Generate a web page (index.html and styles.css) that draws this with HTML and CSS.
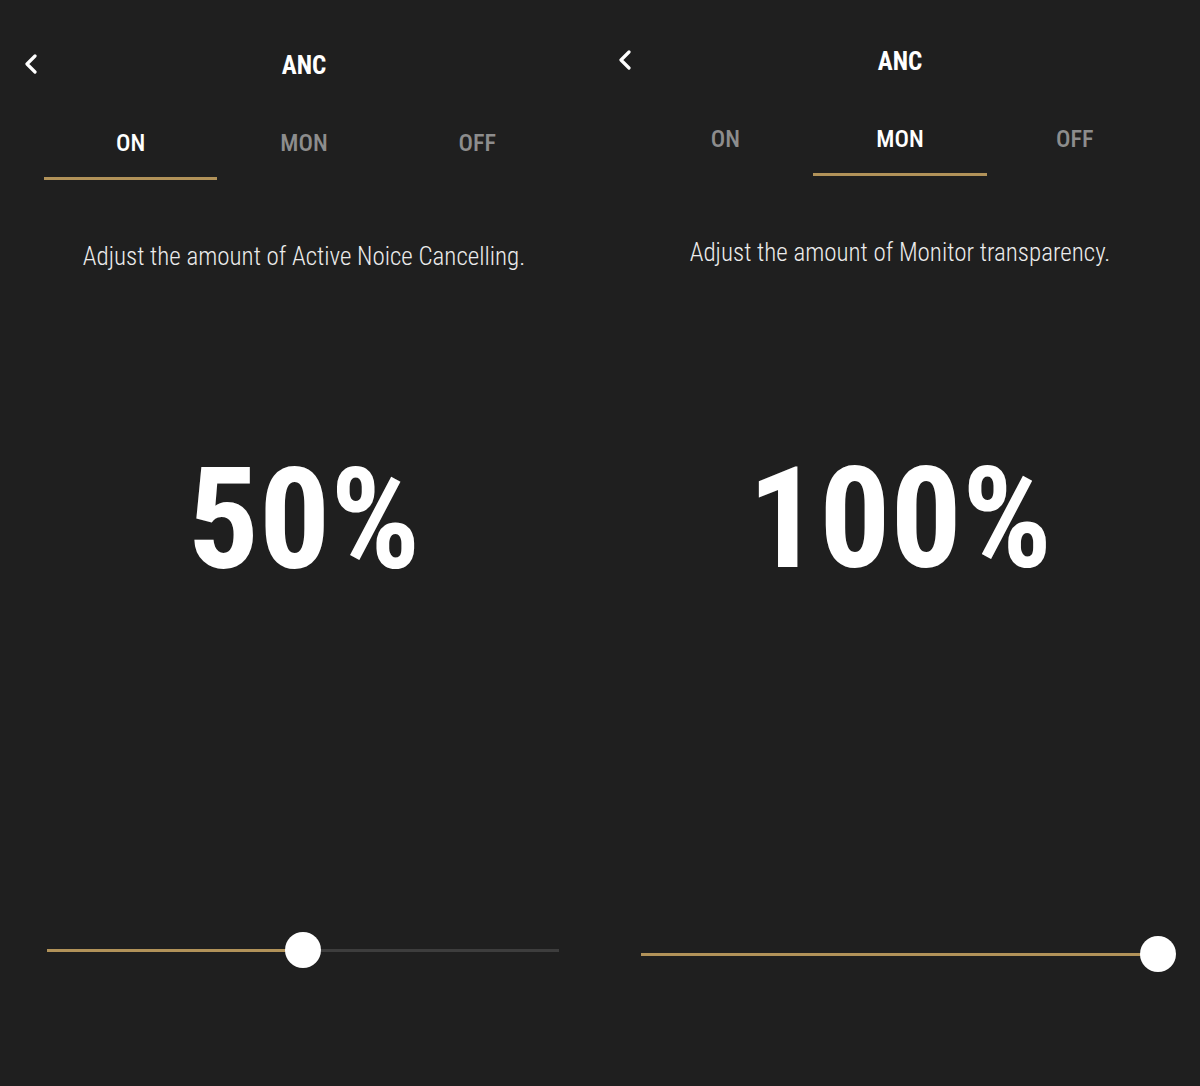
FILE: index.html
```html
<!DOCTYPE html>
<html lang="en">
<head>
    <meta charset="UTF-8">
    <title>ANC</title>
    <link rel="stylesheet" href="styles.css">
</head>
<body>

<div class="screens">
    <!-- ANC on -->
    <div class="screen screen-left">
        <div class="topbar">
            <button class="back-btn" aria-label="Back">
                <svg width="16" height="20" viewBox="0 0 16 20"><path d="M12 2 L4 10 L12 18" fill="none" stroke="#fff" stroke-width="3.2" stroke-linecap="round" stroke-linejoin="round"/></svg>
            </button>
            <h1 class="title">ANC</h1>
            <span></span>
        </div>
        <div class="tabs">
            <div class="tab active">ON</div>
            <div class="tab">MON</div>
            <div class="tab">OFF</div>
        </div>
        <p class="desc">Adjust the amount of Active Noice Cancelling.</p>
        <div class="amount">50%</div>
        <div class="slider">
            <div class="track">
                <div class="fill" style="width: 50%"></div>
            </div>
            <div class="thumb" style="left: 50%"></div>
        </div>
    </div>

    <!-- Monitor -->
    <div class="screen screen-right">
        <div class="topbar">
            <button class="back-btn" aria-label="Back">
                <svg width="16" height="20" viewBox="0 0 16 20"><path d="M12 2 L4 10 L12 18" fill="none" stroke="#fff" stroke-width="3.2" stroke-linecap="round" stroke-linejoin="round"/></svg>
            </button>
            <h1 class="title">ANC</h1>
            <span></span>
        </div>
        <div class="tabs">
            <div class="tab">ON</div>
            <div class="tab active">MON</div>
            <div class="tab">OFF</div>
        </div>
        <p class="desc">Adjust the amount of Monitor transparency.</p>
        <div class="amount">100%</div>
        <div class="slider">
            <div class="track">
                <div class="fill" style="width: 100%"></div>
            </div>
            <div class="thumb" style="left: 100%"></div>
        </div>
    </div>
</div>

</body>
</html>
```

FILE: styles.css
```css
/* Basic */
body {
    margin: 0;
    background-color: #1f1f1f;
    font-family: Roboto, "Noto Sans", sans-serif;
    font-stretch: condensed;
    color: #fff;
}

.screens {
    display: flex;
    height: 1086px;
}

.screen {
    width: 600px;
    display: flex;
    flex-direction: column;
    box-sizing: border-box;
}

.screen-left {
    padding-top: 40px;
    padding-left: 8px;
}

.screen-right {
    padding-top: 36px;
}

.topbar {
    display: grid;
    grid-template-columns: 1fr auto 1fr;
    align-items: center;
    height: 48px;
}

.screen-left .topbar {
    padding: 0 15px;
}

.screen-right .topbar {
    padding: 0 17px;
}

.back-btn {
    background: none;
    border: none;
    padding: 0;
    width: 16px;
    height: 20px;
    display: flex;
    cursor: pointer;
}

.title {
    margin: 0;
    padding-top: 4px;
    font-size: 25px;
    font-weight: 700;
    line-height: 44px;
}

/* Tabs */
.tabs {
    display: grid;
    grid-template-columns: repeat(3, 1fr);
    margin-top: 43px;
}

.screen-left .tabs {
    margin-left: 36px;
    margin-right: 36px;
}

.screen-right .tabs {
    margin-left: 38px;
    margin-right: 38px;
}

.tab {
    text-align: center;
    font-size: 24px;
    font-weight: 500;
    line-height: 24px;
    padding-bottom: 22px;
    color: #8d8d8d;
    border-bottom: 3px solid transparent;
}

.tab.active {
    color: #fff;
    border-bottom-color: #b19259;
}

.desc {
    margin: 62px 0 0;
    text-align: center;
    font-size: 25px;
    font-weight: 300;
    line-height: 30px;
    color: #ececec;
}

.amount {
    margin-top: 177px;
    text-align: center;
    font-size: 141px;
    font-weight: 700;
    line-height: 141px;
}

.screen-right .amount {
    margin-top: 180px;
}

/* Slider */
.slider {
    position: relative;
    height: 36px;
    display: flex;
    align-items: center;
}

.screen-left .slider {
    margin: 342px 41px 0 39px;
}

.screen-right .slider {
    margin: 347px 42px 0 41px;
}

.track {
    flex: 1;
    height: 3px;
    background-color: #3d3d3d;
}

.fill {
    height: 100%;
    background-color: #b19259;
}

.thumb {
    position: absolute;
    top: 0;
    width: 36px;
    height: 36px;
    margin-left: -18px;
    border-radius: 50%;
    background-color: #fff;
}
```
